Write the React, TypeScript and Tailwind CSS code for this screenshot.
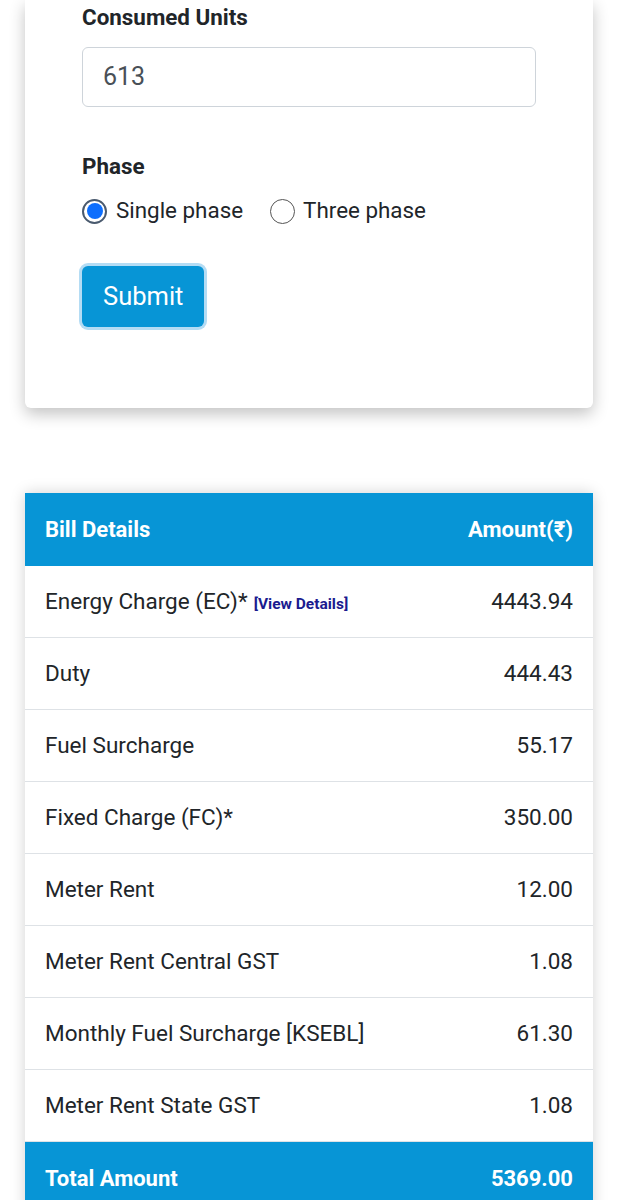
const rows: { label: string; amount: string; details?: boolean }[] = [
  { label: 'Energy Charge (EC)*', amount: '4443.94', details: true },
  { label: 'Duty', amount: '444.43' },
  { label: 'Fuel Surcharge', amount: '55.17' },
  { label: 'Fixed Charge (FC)*', amount: '350.00' },
  { label: 'Meter Rent', amount: '12.00' },
  { label: 'Meter Rent Central GST', amount: '1.08' },
  { label: 'Monthly Fuel Surcharge [KSEBL]', amount: '61.30' },
  { label: 'Meter Rent State GST', amount: '1.08' },
];

const App = () => {
  return (
    <div className="min-h-[1200px] bg-white font-['Roboto',sans-serif] text-[#212529] overflow-hidden">
      {/* Calculator form card */}
      <div className="ml-[25px] w-[568px] bg-white rounded-b-md shadow-[0_6px_16px_rgba(0,0,0,0.24)] px-[57px] pt-[4px] pb-[81px]">
        <label className="block text-[22.4px] leading-[26px] font-bold text-[#212529]">Consumed Units</label>
        <div className="mt-[17px] h-[60px] w-full border border-[#ced4da] rounded-md flex items-center px-[20px] text-[25px] text-[#495057]">
          613
        </div>

        <div className="mt-[46px] text-[22.4px] leading-[26px] font-bold">Phase</div>
        <div className="mt-[18px] flex items-center h-[28px] text-[22.4px]">
          <span className="w-[25px] h-[25px] rounded-full border-[2px] border-[#4a5a6e] flex items-center justify-center">
            <span className="w-[16px] h-[16px] rounded-full bg-[#0d6efd]" />
          </span>
          <span className="ml-[9px]">Single phase</span>
          <span className="ml-[27px] w-[25px] h-[25px] rounded-full border-[1.5px] border-[#555]" />
          <span className="ml-[8px]">Three phase</span>
        </div>

        <button className="mt-[41px] h-[61px] px-[21px] rounded-md bg-[#0795d6] text-white text-[25.5px] ring-[3px] ring-[#b4dcf4]">
          Submit
        </button>
      </div>

      {/* Bill details table */}
      <div className="mt-[85px] ml-[25px] w-[568px] bg-white shadow-[0_0_14px_rgba(0,0,0,0.18)]">
        <div className="h-[73px] bg-[#0795d6] px-[20px] flex items-center justify-between text-white text-[22px] font-bold">
          <span>Bill Details</span>
          <span>Amount(₹)</span>
        </div>
        {rows.map((row) => (
          <div
            key={row.label}
            className="h-[72px] px-[20px] flex items-center justify-between border-b border-[#dee2e6] text-[22.5px]"
          >
            <span>
              {row.label}
              {row.details && (
                <span className="ml-[6px] text-[15.5px] font-bold text-[#1b1b8f]">[View Details]</span>
              )}
            </span>
            <span>{row.amount}</span>
          </div>
        ))}
        <div className="h-[72px] bg-[#0795d6] px-[20px] flex items-center justify-between text-white text-[22px] font-bold">
          <span>Total Amount</span>
          <span>5369.00</span>
        </div>
      </div>
    </div>
  );
};

export default App;
